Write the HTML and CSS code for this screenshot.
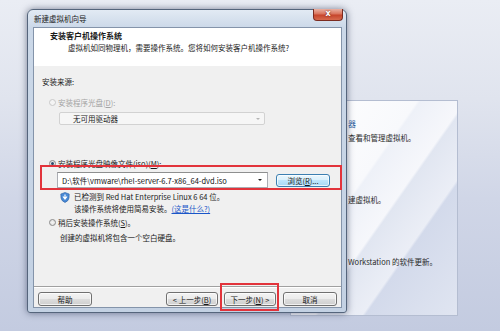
FILE: index.html
```html
<!DOCTYPE html>
<html>
<head>
	<meta charset="utf-8">
	<title>新建虚拟机向导</title>
	<link rel="stylesheet" href="styles.css">
</head>
<body>

	<!-- 后面的主窗口 (只露出右边一点) -->
	<div class="home">
		<p class="home-head">器</p>
		<p class="home-line first">查看和管理虚拟机。</p>
		<p class="home-line second">建虚拟机。</p>
		<p class="home-line third">Workstation 的软件更新。</p>
	</div>

	<!-- 向导窗口 -->
	<div class="wizard">
		<div class="titlebar">
			<span class="title">新建虚拟机向导</span>
			<span class="close">x</span>
		</div>

		<div class="client">
			<div class="head">
				<h1>安装客户机操作系统</h1>
				<p>虚拟机如同物理机，需要操作系统。您将如何安装客户机操作系统?</p>
			</div>

			<div class="main">
				<div class="label">安装来源:</div>

				<div class="opt disabled">
					<span class="radio"></span>
					<span>安装程序光盘(<u>D</u>):</span>
				</div>
				<div class="drop">
					<span>无可用驱动器</span>
					<span class="arrow"></span>
				</div>

				<div class="opt">
					<span class="radio on"></span>
					<span>安装程序光盘映像文件(iso)(<u>M</u>):</span>
				</div>
				<div class="iso-row">
					<div class="combo">
						<span>D:\软件\vmware\rhel-server-6.7-x86_64-dvd.iso</span>
						<span class="arrow"></span>
					</div>
					<button class="btn browse">浏览(<u>R</u>)...</button>
				</div>

				<div class="detect">
					<svg class="shield" width="10" height="11" viewBox="0 0 10 11">
						<path d="M5 0.5 L9.2 2 L9 6 Q8.5 9 5 10.5 Q1.5 9 1 6 L0.8 2 Z" fill="#4a8ad6" stroke="#2a5fa2" stroke-width="0.6"/>
						<path d="M3 4.5 L5 7 L7 4.5 M5 2.5 L5 7" fill="none" stroke="#fff" stroke-width="1.2"/>
					</svg>
					<div class="detect-text">
						<div>已检测到 Red Hat Enterprise Linux 6 64 位。</div>
						<div>该操作系统将使用简易安装。<a href="#">(这是什么?)</a></div>
					</div>
				</div>

				<div class="opt later">
					<span class="radio"></span>
					<span>稍后安装操作系统(<u>S</u>)。</span>
				</div>
				<div class="note">创建的虚拟机将包含一个空白硬盘。</div>
			</div>

			<div class="foot">
				<button class="btn wide">帮助</button>
				<div class="foot-right">
					<button class="btn">&lt; 上一步(<u>B</u>)</button>
					<button class="btn">下一步(<u>N</u>) &gt;</button>
					<button class="btn wide cancel">取消</button>
				</div>
			</div>
		</div>
	</div>

	<!-- 红框标注 -->
	<div class="mark mark-iso"></div>
	<div class="mark mark-next"></div>

</body>
</html>
```

FILE: styles.css
```css
	body {
		margin: 0;
		width: 500px;
		height: 331px;
		overflow: hidden;
		position: relative;
		font-family: "Noto Sans CJK SC", "Noto Sans", sans-serif;
		font-size: 7.5px;
		color: #1a1a1a;
		background: linear-gradient(180deg, #eaedf4 0%, #e0e4ee 30%, #d0d6e7 60%, #c3cbe0 100%);
	}
	p {
		margin: 0;
	}

	/* 后面的主窗口 */
	.home {
		position: absolute;
		left: 290px;
		top: 100px;
		width: 168px;
		height: 216px;
		box-sizing: border-box;
		padding-left: 57px;
		border: 1px solid #b4bdd1;
		background: linear-gradient(125deg, #ffffff 0%, #f8f9fc 40%, #eef1f8 41%, #f6f7fb 55%, #e1e6f1 56%, #ebeef6 70%, #d3daeb 71%, #e0e5f1 100%);
		color: #2b2b2b;
	}
	.home-head {
		margin-top: 18px;
		line-height: 10px;
		color: #2c5e9e;
		font-size: 8px;
	}
	.home-line {
		line-height: 10px;
	}
	.home-line.first {
		margin-top: 4px;
	}
	.home-line.second {
		margin-top: 52px;
	}
	.home-line.third {
		margin-top: 52px;
	}

	/* 向导窗口 */
	.wizard {
		position: absolute;
		left: 27px;
		top: 9px;
		width: 320px;
		height: 304px;
		box-sizing: border-box;
		padding: 0 4px 4px 5px;
		display: flex;
		flex-direction: column;
		border: 1px solid #55657c;
		border-radius: 6px 6px 3px 3px;
		background: linear-gradient(180deg, #e2eaf4 0px, #cbd8e8 18px, #c3d1e3 100%);
		box-shadow: 0 0 7px rgba(30, 40, 70, 0.55);
	}
	.titlebar {
		height: 17px;
		display: flex;
		align-items: center;
		padding: 0 0 1px 1px;
		box-sizing: border-box;
		color: #202020;
	}
	.close {
		position: absolute;
		right: 3px;
		top: -1px;
		width: 30px;
		height: 12px;
		box-sizing: border-box;
		border: 1px solid #7b2b20;
		border-top: none;
		border-radius: 0 0 4px 4px;
		background: linear-gradient(180deg, #eab1a3 0%, #d9735c 45%, #c6452c 55%, #d66a4d 100%);
		color: #fff;
		font-family: "DejaVu Sans", sans-serif;
		font-weight: bold;
		font-size: 8px;
		line-height: 10px;
		text-align: center;
		text-shadow: 0 0 2px #5a1a10;
	}
	.client {
		flex: 1;
		display: flex;
		flex-direction: column;
		border: 1px solid #8494aa;
		background: #f0f0f0;
	}

	.head {
		height: 34px;
		padding: 3px 0 0 16px;
		box-sizing: content-box;
		background: #fff;
		border-bottom: 1px solid #a0a0a0;
	}
	.head h1 {
		margin: 0;
		font-size: 8px;
		font-weight: bold;
		line-height: 10px;
	}
	.head p {
		margin: 2px 0 0 18px;
		line-height: 10px;
	}

	.main {
		height: 221px;
		box-sizing: border-box;
		padding: 11px 0 0 8px;
		border-top: 1px solid #fff;
		margin-top: -1px;
	}
	.label {
		line-height: 10px;
	}
	.opt {
		display: flex;
		align-items: center;
		height: 10px;
		margin: 10px 0 0 7px;
	}
	.opt.disabled {
		color: #a3a3a3;
	}
	.radio {
		width: 7px;
		height: 7px;
		box-sizing: border-box;
		margin-right: 2px;
		border-radius: 50%;
		border: 1px solid #8a8a8a;
		background: radial-gradient(circle, #f4f4f4 0%, #dcdcdc 100%);
		position: relative;
	}
	.disabled .radio {
		border-color: #c9c9c9;
		background: #f4f4f4;
	}
	.radio.on::after {
		content: "";
		position: absolute;
		left: 1px;
		top: 1px;
		width: 3px;
		height: 3px;
		border-radius: 50%;
		background: #2a4a6a;
	}
	.drop {
		display: flex;
		align-items: center;
		justify-content: space-between;
		width: 206px;
		height: 13px;
		box-sizing: border-box;
		margin: 5px 0 0 17px;
		padding: 0 4px 0 13px;
		border: 1px solid #d2d2d2;
		border-radius: 2px;
		background: #f6f6f6;
		color: #222;
	}
	.arrow {
		width: 0;
		height: 0;
		border-left: 2px solid transparent;
		border-right: 2px solid transparent;
		border-top: 2px solid #222;
	}
	.drop .arrow {
		border-top-color: #b5b5b5;
	}
	.drop + .opt {
		margin-top: 33px;
	}
	.iso-row {
		display: flex;
		align-items: center;
		gap: 8px;
		margin: 4px 0 0 15px;
	}
	.combo {
		display: flex;
		align-items: center;
		justify-content: space-between;
		width: 211px;
		height: 16px;
		box-sizing: border-box;
		padding: 0 5px 0 4px;
		border: 1px solid #abadb3;
		border-top-color: #8e8f8f;
		background: #fff;
		color: #111;
	}
	.btn {
		height: 14px;
		width: 52px;
		padding: 0;
		box-sizing: border-box;
		font-family: inherit;
		font-size: 7.5px;
		color: #1a1a1a;
		border: 1px solid #707070;
		border-radius: 3px;
		background: linear-gradient(180deg, #f3f3f3 0%, #ebebeb 49%, #dddddd 50%, #cfcfcf 100%);
		box-shadow: inset 0 0 0 1px rgba(255, 255, 255, 0.7);
	}
	.btn.wide {
		width: 54px;
	}
	.btn.browse {
		width: 54px;
		height: 13px;
		border-color: #3c7fb1;
		background: linear-gradient(180deg, #eaf6fd 0%, #d9f0fc 49%, #bee6fd 50%, #a7d9f5 100%);
	}

	.detect {
		display: flex;
		align-items: flex-start;
		margin: 3px 0 0 18px;
	}
	.shield {
		margin: 1px 4px 0 0;
	}
	.detect-text {
		line-height: 12px;
	}
	.detect-text a {
		color: #1a56c8;
	}
	.opt.later {
		margin-top: 2px;
	}
	.note {
		margin: 6px 0 0 18px;
		line-height: 10px;
	}

	.foot {
		flex: 1;
		display: flex;
		justify-content: space-between;
		padding: 5px 4px 0 4px;
		border-top: 1px solid #a0a0a0;
		box-shadow: inset 0 1px 0 #fff;
	}
	.foot-right {
		display: flex;
		gap: 6px;
	}
	.foot-right .cancel {
		margin-left: 1px;
	}

	/* 红框 */
	.mark {
		position: absolute;
		box-sizing: border-box;
		border: 2px solid #e2333b;
	}
	.mark-iso {
		left: 40px;
		top: 165px;
		width: 302px;
		height: 25px;
	}
	.mark-next {
		left: 220px;
		top: 283px;
		width: 59px;
		height: 28px;
	}
```
